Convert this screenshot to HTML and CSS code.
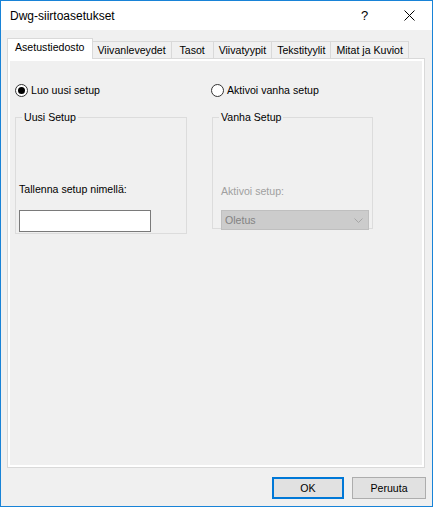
FILE: index.html
```html
<!DOCTYPE html>
<html lang="fi">
<head>
  <meta charset="UTF-8" />
  <meta name="viewport" content="width=device-width, initial-scale=1.0"/>
  <title>Dwg-siirtoasetukset</title>
  <link rel="stylesheet" href="styles.css">
</head>
<body>
  <div class="window">
    <div class="titlebar">
      <div class="title">Dwg-siirtoasetukset</div>
      <div class="caption-btn help">?</div>
      <div class="caption-btn close">
        <svg width="11" height="11" viewBox="0 0 11 11">
          <path d="M0.5 0.5 L10.5 10.5 M10.5 0.5 L0.5 10.5" stroke="#000" stroke-width="1" fill="none"/>
        </svg>
      </div>
    </div>

    <div class="body">
      <div class="tabs">
        <div class="tab active">Asetustiedosto</div>
        <div class="tab">Viivanleveydet</div>
        <div class="tab">Tasot</div>
        <div class="tab">Viivatyypit</div>
        <div class="tab">Tekstityylit</div>
        <div class="tab">Mitat ja Kuviot</div>
      </div>

      <div class="panel">
        <div class="columns">
          <div class="column">
            <label class="radio">
              <span class="dot checked"></span>
              Luo uusi setup
            </label>
            <fieldset class="group group-new">
              <legend>Uusi Setup</legend>
              <div class="group-body">
                <div class="field-label">Tallenna setup nimellä:</div>
                <div class="textbox"></div>
              </div>
            </fieldset>
          </div>

          <div class="column">
            <label class="radio">
              <span class="dot"></span>
              Aktivoi vanha setup
            </label>
            <fieldset class="group group-old">
              <legend>Vanha Setup</legend>
              <div class="group-body">
                <div class="field-label disabled">Aktivoi setup:</div>
                <div class="combo">
                  <span>Oletus</span>
                  <svg width="9" height="5" viewBox="0 0 9 5">
                    <path d="M0.5 0.5 L4.5 4.5 L8.5 0.5" stroke="#a6a6a6" stroke-width="1" fill="none"/>
                  </svg>
                </div>
              </div>
            </fieldset>
          </div>
        </div>
      </div>

      <div class="buttons">
        <div class="btn default">OK</div>
        <div class="btn cancel">Peruuta</div>
      </div>
    </div>
  </div>
</body>
</html>
```

FILE: styles.css
```css
* {
  box-sizing: border-box;
}

body {
  margin: 0;
  font-family: 'Liberation Sans', Arial, sans-serif;
  font-size: 10.6px;
  color: #000;
  background-color: #fff;
}

.window {
  width: 433px;
  height: 507px;
  border: 1px solid #1883d7;
  background-color: #f0f0f0;
  display: flex;
  flex-direction: column;
}

/* title bar */

.titlebar {
  height: 29px;
  background-color: #fff;
  display: flex;
  align-items: center;
  flex-shrink: 0;
}

.title {
  flex: 1;
  padding-left: 9px;
  font-size: 12px;
}

.caption-btn {
  width: 45px;
  height: 29px;
  display: flex;
  align-items: center;
  justify-content: center;
}

.help {
  font-size: 13px;
}

/* tabs */

.body {
  padding: 8px 7px 7px 6px;
  display: flex;
  flex-direction: column;
  flex: 1;
}

.tabs {
  display: flex;
  align-items: flex-end;
  height: 20px;
}

.tab {
  height: 17px;
  min-width: 43px;
  padding: 2px 5px 0 5px;
  line-height: 13px;
  text-align: center;
  border: 1px solid #d9d9d9;
  border-bottom: none;
  background-color: #f0f0f0;
  white-space: nowrap;
}

.tab + .tab {
  margin-left: -1px;
}

.tab.active {
  height: 21px;
  margin-bottom: -1px;
  padding: 2px 7px 0 7px;
  background-color: #fff;
  position: relative;
  z-index: 1;
}

.panel {
  height: 410px;
  border: 1px solid #d9d9d9;
  box-shadow: inset 0 0 0 2px #fff;
  padding: 24px 7px 0 7px;
}

.columns {
  display: grid;
  grid-template-columns: 196px 1fr;
}

.column {
  display: flex;
  flex-direction: column;
  align-items: flex-start;
}

/* radios */

.radio {
  display: flex;
  align-items: center;
  gap: 3px;
  height: 15px;
  line-height: 13px;
}

.dot {
  width: 13px;
  height: 13px;
  border: 1px solid #333;
  border-radius: 50%;
  background-color: #fff;
  display: flex;
  align-items: center;
  justify-content: center;
}

.dot.checked::after {
  content: "";
  width: 7px;
  height: 7px;
  border-radius: 50%;
  background-color: #000;
}

/* group boxes */

.group {
  margin: 13px 0 0 0;
  padding: 0;
  border: 1px solid #dcdcdc;
  min-width: 0;
}

.group legend {
  margin-left: 6px;
  padding: 0 2px;
  line-height: 13px;
}

.group-body {
  display: flex;
  flex-direction: column;
  justify-content: flex-end;
}

.group-new {
  width: 172px;
}

.group-new .group-body {
  height: 109px;
  padding: 0 3px 1px 3px;
}

.group-old {
  width: 161px;
  margin-left: 1px;
}

.group-old .group-body {
  height: 104px;
  padding: 0 2px 0 8px;
}

.field-label {
  line-height: 13px;
  margin-bottom: 14px;
}

.field-label.disabled {
  color: #a0a0a0;
  margin-bottom: 12px;
}

.textbox {
  width: 132px;
  height: 22px;
  border: 1px solid #7a7a7a;
  background-color: #fff;
}

.combo {
  width: 148px;
  height: 20px;
  margin-bottom: -2px;
  border: 1px solid #bfbfbf;
  background-color: #cccccc;
  color: #838383;
  display: flex;
  align-items: center;
  justify-content: space-between;
  padding: 0 5px 0 3px;
}

/* dialog buttons */

.buttons {
  display: flex;
  justify-content: flex-end;
  gap: 8px;
  margin-top: 9px;
}

.btn {
  height: 22px;
  border: 1px solid #adadad;
  background-color: #e1e1e1;
  display: flex;
  align-items: center;
  justify-content: center;
  line-height: 13px;
}

.btn.default {
  width: 72px;
  border: 2px solid #0078d7;
}

.btn.cancel {
  width: 74px;
  margin-right: -1px;
}
```
